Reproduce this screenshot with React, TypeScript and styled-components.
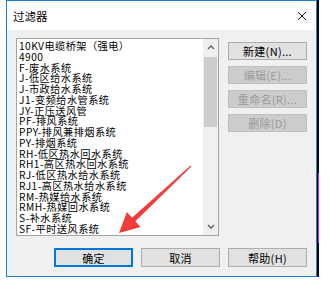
import React from 'react'
import styled, { createGlobalStyle } from 'styled-components'

const GlobalStyle = createGlobalStyle`
  html, body {
    margin: 0;
    padding: 0;
    background: #fff;
  }
  body {
    font-family: "Noto Sans CJK SC", "Liberation Sans", sans-serif;
  }
`

const items = [
  '10KV电缆桥架（强电）',
  '4900',
  'F-废水系统',
  'J-低区给水系统',
  'J-市政给水系统',
  'J1-变频给水管系统',
  'JY-正压送风管',
  'PF-排风系统',
  'PPY-排风兼排烟系统',
  'PY-排烟系统',
  'RH-低区热水回水系统',
  'RH1-高区热水回水系统',
  'RJ-低区热水给水系统',
  'RJ1-高区热水给水系统',
  'RM-热媒给水系统',
  'RMH-热媒回水系统',
  'S-补水系统',
  'SF-平时送风系统',
]

const sideButtons = [
  { label: '新建(N)...', disabled: false },
  { label: '编辑(E)...', disabled: true },
  { label: '重命名(R)...', disabled: true },
  { label: '删除(D)', disabled: true },
]

function App() {
  return (
    <Page>
      <GlobalStyle />
      <Dialog>
        <TitleBar>
          <Title>过滤器</Title>
          <CloseIcon width="10" height="10" viewBox="0 0 10 10">
            <path d="M1 1 L9 9 M9 1 L1 9" stroke="#111" strokeWidth="1" fill="none" />
          </CloseIcon>
        </TitleBar>
        <Body>
          <TopRow>
            <ListBox>
              <Items>
                {items.map((t) => (
                  <Item key={t}>{t}</Item>
                ))}
              </Items>
              <ScrollBar>
                <ScrollArrow>
                  <svg width="8" height="5" viewBox="0 0 8 5">
                    <path d="M1 4 L4 1 L7 4" stroke="#606060" strokeWidth="1.4" fill="none" />
                  </svg>
                </ScrollArrow>
                <Track>
                  <Thumb />
                </Track>
                <ScrollArrow>
                  <svg width="8" height="5" viewBox="0 0 8 5">
                    <path d="M1 1 L4 4 L7 1" stroke="#606060" strokeWidth="1.4" fill="none" />
                  </svg>
                </ScrollArrow>
              </ScrollBar>
            </ListBox>
            <SideColumn>
              {sideButtons.map((b) => (
                <Button key={b.label} $disabled={b.disabled}>
                  {b.label}
                </Button>
              ))}
            </SideColumn>
          </TopRow>
          <BottomRow>
            <Button $primary>确定</Button>
            <Button>取消</Button>
            <Button>帮助(H)</Button>
          </BottomRow>
        </Body>
      </Dialog>
      <EdgeStrip />
      <Arrow width="331" height="282" viewBox="0 0 331 282">
        <polygon
          points="190.6,165.6 132,217.7 126.9,212.1 119,233 140.5,226.9 135.4,221.3 191.4,166.4"
          fill="#f23c3c"
        />
      </Arrow>
    </Page>
  )
}

export default App

const Page = styled.div`
  position: relative;
  width: 331px;
  height: 282px;
  padding-left: 6px;
  box-sizing: border-box;
  display: flex;
  align-items: flex-start;
  overflow: hidden;
`

const Dialog = styled.div`
  width: 311px;
  height: 277px;
  box-sizing: border-box;
  border: 1px solid #1883d7;
  background: #f0f0f0;
  display: flex;
  flex-direction: column;
`

const EdgeStrip = styled.div`
  width: 2px;
  height: 277px;
  background:
    linear-gradient(#000 173px, #d81fd8 173px, #d81fd8 243px, #000 243px) right / 1px 100% no-repeat,
    #000;
`

const TitleBar = styled.div`
  height: 29px;
  background: #fff;
  display: flex;
  align-items: center;
  justify-content: space-between;
  padding: 0 9px 0 6px;
`

const Title = styled.span`
  font-size: 11.5px;
  color: #000;
  margin-top: 1px;
`

const CloseIcon = styled.svg`
  display: block;
`

const Body = styled.div`
  flex: 1;
  padding: 8px 9px 0 9px;
  display: flex;
  flex-direction: column;
`

const TopRow = styled.div`
  display: flex;
  gap: 9px;
`

const ListBox = styled.div`
  width: 203px;
  height: 198px;
  box-sizing: border-box;
  border: 1px solid #a2a4aa;
  background: #fff;
  display: flex;
`

const Items = styled.div`
  flex: 1;
  padding: 2px 0 0 2px;
  overflow: hidden;
`

const Item = styled.div`
  font-size: 10.2px;
  line-height: 10.75px;
  height: 10.75px;
  letter-spacing: 0.45px;
  color: #000;
  white-space: nowrap;
`

const ScrollBar = styled.div`
  width: 15px;
  background: #f0f0f0;
  display: flex;
  flex-direction: column;
`

const ScrollArrow = styled.div`
  height: 17px;
  display: flex;
  align-items: center;
  justify-content: center;
`

const Track = styled.div`
  flex: 1;
  padding-top: 1px;
`

const Thumb = styled.div`
  height: 70px;
  margin: 0 1px;
  background: #cdcdcd;
`

const SideColumn = styled.div`
  padding-top: 4px;
  display: flex;
  flex-direction: column;
  gap: 6px;
`

const Button = styled.div<{ $disabled?: boolean; $primary?: boolean }>`
  width: 79px;
  height: 18px;
  box-sizing: border-box;
  display: flex;
  align-items: center;
  justify-content: center;
  font-size: 11px;
  letter-spacing: 0.3px;
  color: ${(p) => (p.$disabled ? '#9a9a9a' : '#000')};
  background: ${(p) => (p.$disabled ? '#cccccc' : '#e1e1e1')};
  border: ${(p) =>
    p.$primary ? '2px solid #0078d7' : p.$disabled ? '1px solid #bfbfbf' : '1px solid #adadad'};
`

const BottomRow = styled.div`
  margin-top: 12px;
  display: flex;
  justify-content: flex-end;
  gap: 8px;

  & > div {
    height: 19px;
  }
`

const Arrow = styled.svg`
  position: absolute;
  left: 0;
  top: 0;
  pointer-events: none;
`
